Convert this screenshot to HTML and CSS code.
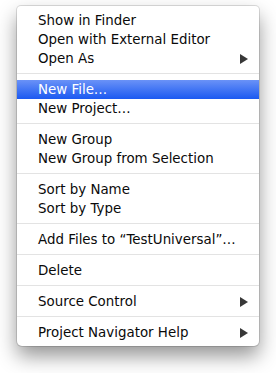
FILE: index.html
```html
<!DOCTYPE html>
<html>
<head>
<meta charset="utf-8">
<link rel="stylesheet" href="styles.css">
</head>
<body>
<div class="menu">
  <div class="item">Show in Finder</div>
  <div class="item">Open with External Editor</div>
  <div class="item sub">Open As<span class="arrow"></span></div>
  <div class="sep"></div>
  <div class="item active">New File…</div>
  <div class="item">New Project…</div>
  <div class="sep"></div>
  <div class="item">New Group</div>
  <div class="item">New Group from Selection</div>
  <div class="sep"></div>
  <div class="item">Sort by Name</div>
  <div class="item">Sort by Type</div>
  <div class="sep"></div>
  <div class="item">Add Files to “TestUniversal”…</div>
  <div class="sep"></div>
  <div class="item">Delete</div>
  <div class="sep"></div>
  <div class="item sub">Source Control<span class="arrow"></span></div>
  <div class="sep"></div>
  <div class="item sub">Project Navigator Help<span class="arrow"></span></div>
</div>
</body>
</html>
```

FILE: styles.css
```css
html, body {
  margin: 0;
  padding: 0;
  background: #ffffff;
}
body {
  box-sizing: border-box;
  min-height: 373px;
  padding: 6px 0 0 17px;
  font-family: "DejaVu Sans", "Liberation Sans", sans-serif;
  font-size: 13.4px;
  color: #0a0a0a;
}
.menu {
  width: 242px;
  padding: 5px 0 4px;
  background: #fff;
  border-radius: 4px 4px 5px 5px;
  box-shadow: 0 0 0 1px rgba(0,0,0,0.13), 0 10px 20px rgba(0,0,0,0.42);
}
.item {
  height: 19px;
  line-height: 19px;
  padding: 0 11px 0 21px;
  display: flex;
  align-items: center;
  justify-content: space-between;
  white-space: nowrap;
}
.item.active {
  background: linear-gradient(#6a92f7, #1b59f1);
  color: #fff;
}
.arrow {
  width: 0;
  height: 0;
  border-top: 5px solid transparent;
  border-bottom: 5px solid transparent;
  border-left: 8px solid #383838;
}
.sep {
  height: 12px;
  display: flex;
  flex-direction: column;
  padding-top: 5px;
  box-sizing: border-box;
}
.sep::before {
  content: "";
  display: block;
  height: 1px;
  background: #e3e3e3;
}
```
